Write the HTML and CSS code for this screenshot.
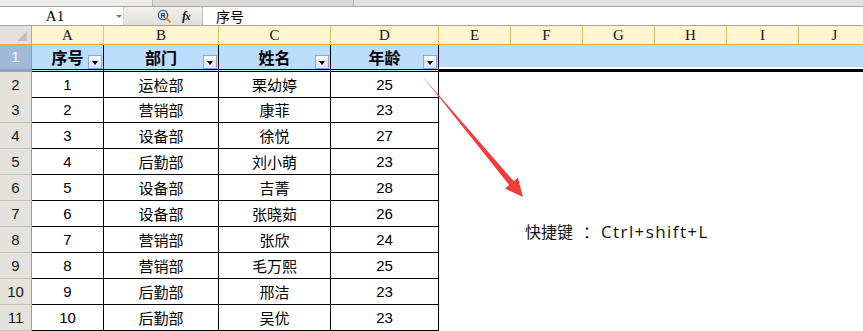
FILE: index.html
```html
<!DOCTYPE html>
<html lang="zh-CN">
<head>
<meta charset="utf-8">
<title>Sheet</title>
<link rel="stylesheet" href="styles.css">
</head>
<body>
<div class="app">
  <div class="topstrip"><span class="ts-a"></span><span class="ts-b"></span><span class="ts-c"></span></div>
  <div class="fbar">
    <div class="namebox"><span class="nb-text">A1</span><span class="nb-drop"></span></div>
    <div class="tools">
      <svg class="ico-zoom" width="14" height="14" viewBox="0 0 14 14">
        <circle cx="6" cy="6" r="4.6" fill="#dfe9f6" stroke="#3a5a8c" stroke-width="1.3"/>
        <text x="6" y="8.6" font-size="7" font-family="Liberation Sans" font-weight="bold" text-anchor="middle" fill="#1c2c50">R</text>
        <path d="M9.3 9.3 L12.8 12.8" stroke="#e08a1e" stroke-width="2" stroke-linecap="round"/>
      </svg>
      <span class="ico-fx">f<span class="x">x</span></span>
    </div>
    <div class="finput">序号</div>
  </div>
  <div class="sheet">
    <div class="row colhead">
      <div class="corner"><span class="tri"></span></div>
      <div class="ch">A</div><div class="ch">B</div><div class="ch">C</div><div class="ch">D</div>
      <div class="ch">E</div><div class="ch">F</div><div class="ch">G</div><div class="ch">H</div>
      <div class="ch">I</div><div class="ch">J</div>
    </div>
    <div class="row r1">
      <div class="rh sel">1</div>
      <div class="c hd">序号<span class="fbtn"></span></div>
      <div class="c hd">部门<span class="fbtn"></span></div>
      <div class="c hd">姓名<span class="fbtn"></span></div>
      <div class="c hd">年龄<span class="fbtn"></span></div>
      <div class="e"></div><div class="e"></div><div class="e"></div><div class="e"></div><div class="e"></div><div class="e"></div>
    </div>
    <div class="row dr first"><div class="rh">2</div><div class="c">1</div><div class="c">运检部</div><div class="c">栗幼婷</div><div class="c">25</div></div>
    <div class="row dr"><div class="rh">3</div><div class="c">2</div><div class="c">营销部</div><div class="c">康菲</div><div class="c">23</div></div>
    <div class="row dr"><div class="rh">4</div><div class="c">3</div><div class="c">设备部</div><div class="c">徐悦</div><div class="c">27</div></div>
    <div class="row dr"><div class="rh">5</div><div class="c">4</div><div class="c">后勤部</div><div class="c">刘小萌</div><div class="c">23</div></div>
    <div class="row dr"><div class="rh">6</div><div class="c">5</div><div class="c">设备部</div><div class="c">吉菁</div><div class="c">28</div></div>
    <div class="row dr"><div class="rh">7</div><div class="c">6</div><div class="c">设备部</div><div class="c">张晓茹</div><div class="c">26</div></div>
    <div class="row dr"><div class="rh">8</div><div class="c">7</div><div class="c">营销部</div><div class="c">张欣</div><div class="c">24</div></div>
    <div class="row dr"><div class="rh">9</div><div class="c">8</div><div class="c">营销部</div><div class="c">毛万熙</div><div class="c">25</div></div>
    <div class="row dr"><div class="rh">10</div><div class="c">9</div><div class="c">后勤部</div><div class="c">邢洁</div><div class="c">23</div></div>
    <div class="row dr"><div class="rh">11</div><div class="c">10</div><div class="c">后勤部</div><div class="c">吴优</div><div class="c">23</div></div>
  </div>
  <svg class="arrow" width="863" height="331" viewBox="0 0 863 331">
    <polygon points="423,77 513.8,181.3 518,177.8 523,197 505,188.6 509.2,185.1" fill="#f23b3b"/>
  </svg>
  <div class="note"><span class="note-cjk">快捷键</span><span class="note-colon">：</span><span class="note-key">Ctrl+shift+L</span></div>
</div>
</body>
</html>
```
FILE: styles.css
```css
html, body {
  margin: 0;
  padding: 0;
  background: #fff;
}
.app {
  position: relative;
  width: 863px;
  height: 331px;
  overflow: hidden;
  font-family: "Liberation Sans", "Noto Sans CJK SC", sans-serif;
  color: #000;
}
.topstrip {
  height: 6px;
  background: #e6e4df;
  border-bottom: 1px solid #a9a7a1;
  display: flex;
}
.ts-a { width: 152px; height: 6px; background: #ecebe7; border-right: 1px solid #b6b3ad; }
.ts-b { width: 200px; height: 6px; background: #dcdad4; border-right: 1px solid #b6b3ad; }
.ts-c { flex: 1; height: 6px; background: #e3e1dc; }

.fbar {
  height: 18px;
  border-bottom: 1px solid #a6a49e;
  display: flex;
  background: #fff;
}
.namebox {
  width: 123px;
  display: flex;
  align-items: center;
  position: relative;
}
.nb-text {
  width: 110px;
  text-align: center;
  font-family: "Liberation Serif", serif;
  font-size: 15px;
  line-height: 18px;
}
.nb-drop {
  width: 0; height: 0;
  border-left: 3px solid transparent;
  border-right: 3px solid transparent;
  border-top: 3px solid #777;
  margin-left: 6px;
}
.tools {
  width: 80px;
  background: linear-gradient(#f1f0ec, #e2e0da);
  border-right: 1px solid #bcbab4;
  border-left: 1px solid #d9d7d1;
  display: flex;
  align-items: center;
  gap: 11px;
  padding-left: 33px;
  box-sizing: border-box;
}
.ico-zoom { display: block; }
.ico-fx {
  font-family: "Liberation Serif", serif;
  font-style: italic;
  font-weight: bold;
  font-size: 13px;
  color: #222;
  letter-spacing: -1px;
}
.ico-fx .x { font-size: 11px; }
.finput {
  flex: 1;
  padding-left: 13px;
  font-family: "Noto Sans CJK SC", sans-serif;
  font-size: 14px;
  line-height: 18px;
}

.row {
  display: grid;
  grid-template-columns: 32px 72px 115px 112px 108px repeat(6, 72px);
}
.colhead {
  height: 19px;
  background: #fff5cf;
  border-bottom: 1px solid #d9b73a;
  box-sizing: border-box;
}
.corner {
  background: #e3e1dc;
  border-right: 1px solid #a8a6a0;
  position: relative;
}
.tri {
  position: absolute;
  right: 4px;
  bottom: 3px;
  width: 0; height: 0;
  border-left: 10px solid transparent;
  border-bottom: 10px solid #c3c1bb;
}
.ch {
  border-right: 1px solid #e3c460;
  text-align: center;
  font-family: "Liberation Serif", serif;
  font-size: 15px;
  line-height: 18px;
  color: #111;
}

.r1 {
  height: 27px;
}
.rh {
  background: #e4e2dd;
  border-right: 1px solid #9d9b95;
  border-bottom: 1px solid #c6c3bc;
  box-sizing: border-box;
  font-size: 15px;
  text-align: center;
  line-height: 25px;
  color: #1a1a1a;
}
.rh.sel {
  background: #a2b8d8;
  color: #fff;
  line-height: 24px;
  border-bottom: 3px solid #8fa4c2;
}
.c {
  border-right: 1px solid #000;
  border-bottom: 1px solid #000;
  box-sizing: border-box;
  text-align: center;
  font-size: 15px;
  line-height: 25px;
  position: relative;
}
.c.hd {
  background: #bcdcfc;
  border-bottom: 3px double #000;
  font-family: "Noto Sans CJK SC", sans-serif;
  font-weight: bold;
  font-size: 16px;
  line-height: 24px;
}
.e {
  background: #bcdcfc;
  border-bottom: 3px solid #000;
  box-shadow: inset 0 -2px 0 #fff;
}
.fbtn {
  position: absolute;
  right: 1px;
  bottom: 0;
  width: 14px;
  height: 14px;
  box-sizing: border-box;
  border: 1px solid #8ea6cc;
  background: linear-gradient(#ffffff, #d6e4f6);
}
.fbtn::after {
  content: "";
  position: absolute;
  left: 3px;
  top: 5px;
  border-left: 3.5px solid transparent;
  border-right: 3.5px solid transparent;
  border-top: 4px solid #000;
}
.dr {
  height: 26px;
}
.dr.first {
  height: 25px;
}
.dr .c:nth-child(3), .dr .c:nth-child(4) {
  font-family: "Noto Sans CJK SC", sans-serif;
  font-size: 15px;
}

.arrow {
  position: absolute;
  left: 0;
  top: 0;
  pointer-events: none;
}
.note {
  position: absolute;
  left: 525px;
  top: 219px;
  display: flex;
  align-items: baseline;
  line-height: 24px;
  color: #111;
  white-space: nowrap;
}
.note-cjk, .note-colon {
  font-family: "Noto Sans CJK SC", sans-serif;
  font-size: 16px;
}
.note-colon {
  display: inline-block;
  box-sizing: border-box;
  width: 28px;
  padding-left: 10px;
  text-align: left;
}
.note-key {
  font-family: "Open Sans", "Noto Sans CJK SC", sans-serif;
  font-size: 17px;
  letter-spacing: 1.4px;
}
```
